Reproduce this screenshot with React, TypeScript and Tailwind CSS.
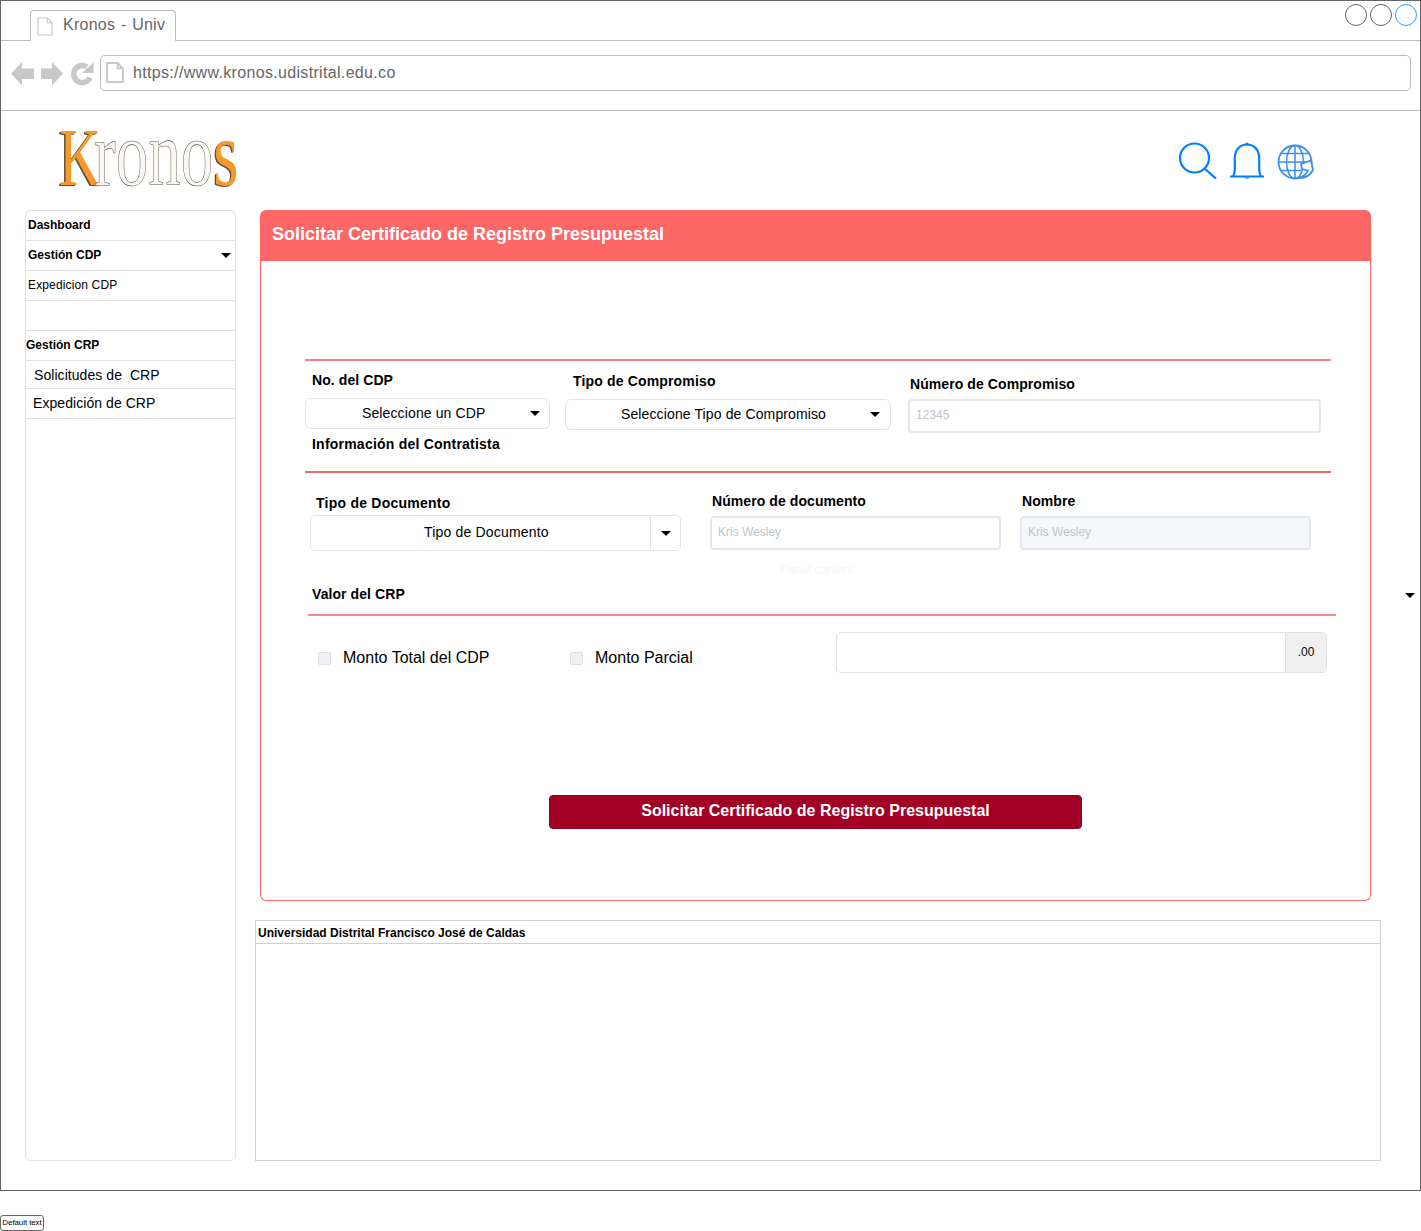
function Caret({ className = "" }: { className?: string }) {
  return (
    <svg viewBox="0 0 10 5" className={"w-[10px] h-[5px] shrink-0 " + className}>
      <polygon points="0,0 10,0 5,5" fill="#000" />
    </svg>
  );
}

function PageIcon({ className = "", width = 1.2 }: { className?: string; width?: number }) {
  return (
    <svg viewBox="0 0 17 20" className={"shrink-0 " + className}>
      <path d="M1 1H11L16 6V19H1Z M11 1V6H16" fill="#fff" stroke="#c8c8c8" strokeWidth={width} />
    </svg>
  );
}

function NavIcons() {
  return (
    <svg viewBox="0 0 84 26" className="w-[84px] h-[26px] shrink-0 mt-[-4px]">
      <path d="M1 12.500L12 1V7.500H24V18H12V24.500Z" fill="#c8c8c8" />
      <path d="M53 12.500L42 1V7.500H31V18H42V24.500Z" fill="#c8c8c8" />
      <path d="M80 16.500A8.500 8.500 0 1 1 77 6" fill="none" stroke="#c8c8c8" strokeWidth="5.500" />
      <path d="M72 12H83.500V1.500Z" fill="#c8c8c8" />
    </svg>
  );
}

function HeaderIcons() {
  return (
    <div className="flex items-start gap-[12px] ml-[940px] mt-[30px]">
      <svg viewBox="0 0 38 38" className="w-[38px] h-[38px]" fill="none" stroke="#007fff" strokeWidth="2.2">
        <circle cx="15.5" cy="17" r="14.5" />
        <path d="M25.5 27.5L37 37.5" />
      </svg>
      <svg viewBox="0 0 36 38" className="w-[36px] h-[38px]" fill="none" stroke="#007fff" strokeWidth="2.2">
        <path d="M1 35.5H35 M4 35.5C5.5 33 5.8 31 5.8 28V17C5.8 9 11 3.500 18 3.500S30.200 9 30.200 17V28C30.200 31 30.500 33 32 35.500" />
        <circle cx="18" cy="3" r="1.500" fill="#007fff" stroke="none" />
        <path d="M15 36.500C16 38 20 38 21 36.500Z" fill="#007fff" stroke="none" />
      </svg>
      <svg viewBox="0 0 38 38" className="w-[38px] h-[38px] mt-[2px]" fill="none" stroke="#3d8ee8" strokeWidth="1.5">
        <circle cx="18" cy="19" r="16.500" strokeWidth="1.800" />
        <ellipse cx="18" cy="19" rx="8.500" ry="16.500" />
        <path d="M18 2.500V35.500 M4 10.500H32 M1.500 19H30 M4 27.500H24" />
        <path d="M24 21L34 17.500L36 27C33 33 27 35 22 35C27 33 30 30 31 27.500L25 26Z" fill="#fff" strokeWidth="1.800" />
      </svg>
    </div>
  );
}

function Logo() {
  return (
    <div className="w-[180px] ml-[58px] mt-[-2px] h-[90px] font-['Liberation_Serif',serif]">
      <div className="origin-left scale-x-[0.7] whitespace-nowrap text-[93px] leading-[90px] text-[#faf8f5] [-webkit-text-stroke:0.6px_#5c5040]">
        <span className="text-[83px] tracking-[-10px] text-[#f7992a] [-webkit-text-stroke:0] [text-shadow:-2px_1px_0_#5c5040]">K</span>
        <span>rono</span>
        <span className="text-[#f7992a] [-webkit-text-stroke:0] [text-shadow:-2px_1px_0_#5c5040]">s</span>
      </div>
    </div>
  );
}

function Sidebar() {
  return (
    <aside className="w-[211px] h-[951px] ml-[24px] shrink-0 border border-[#e0e0e0] rounded-[6px] text-black">
      <div className="h-[30px] pb-[2px] border-b border-[#e0e0e0] flex items-center pl-[2px] text-[12px] font-bold">Dashboard</div>
      <div className="h-[30px] pb-[2px] border-b border-[#e0e0e0] flex items-center justify-between pl-[2px] pr-[4px] text-[12px] font-bold">
        Gestión CDP
        <Caret className="mt-[2px]" />
      </div>
      <div className="h-[30px] pb-[2px] border-b border-[#e0e0e0] flex items-center pl-[2px] text-[12px] tracking-[0.14px]">Expedicion CDP</div>
      <div className="h-[30px] border-b border-[#e0e0e0]" />
      <div className="h-[30px] pb-[2px] border-b border-[#e0e0e0] flex items-center text-[12px] font-bold">Gestión CRP</div>
      <div className="h-[28px] pt-[2px] border-b border-[#e0e0e0] flex items-center pl-[8px] text-[14px] tracking-[0.06px] whitespace-pre">Solicitudes de  CRP</div>
      <div className="h-[30px] border-b border-[#e0e0e0] flex items-center pl-[7px] text-[14px] tracking-[0.06px]">Expedición de CRP</div>
    </aside>
  );
}

function Label({ children, className = "" }: { children: React.ReactNode; className?: string }) {
  return <div className={"h-[20px] leading-[20px] text-[14px] font-bold tracking-[0.08px] text-black " + className}>{children}</div>;
}

function TextBox({ text, className = "" }: { text: string; className?: string }) {
  return (
    <div className={"h-[34px] pb-[2px] border-2 border-[#e4e7ed] rounded-[4px] flex items-center px-[6px] text-[12px] text-[#c0c4cc] " + className}>
      {text}
    </div>
  );
}

function Select({ text, className = "" }: { text: string; className?: string }) {
  return (
    <div className={"h-[31px] border border-[#e4e4e4] rounded-[6px] flex items-center justify-between text-[14px] tracking-[0.12px] text-black " + className}>
      {text}
      <Caret />
    </div>
  );
}

function CheckItem({ text, className = "" }: { text: string; className?: string }) {
  return (
    <div className={"mt-[32px] h-[20px] flex items-center gap-[12px] text-[16px] text-black " + className}>
      <span className="w-[13px] h-[13px] mt-[1px] rounded-[2px] bg-[#eef0f5] border border-[#dcdfe6]" />
      {text}
    </div>
  );
}

function RequestPanel() {
  return (
    <section className="w-[1111px] h-[691px] ml-[24px] flex flex-col">
      <div className="h-[51px] pb-[2px] shrink-0 bg-[#ff6666] rounded-t-[6px] flex items-center pl-[12px] text-[18px] font-bold text-white">
        Solicitar Certificado de Registro Presupuestal
      </div>
      <div className="flex-1 border-x border-b border-[#ff6666] rounded-b-[6px] pt-[98px]">
        <div className="h-[2px] w-[1026px] ml-[44px] bg-[#f98080]" />

        <div className="h-[110px] flex items-start">
          <div className="w-[245px] ml-[44px] mt-[9px]">
            <Label className="pl-[7px] mb-[8px]">No. del CDP</Label>
            <Select text="Seleccione un CDP" className="pl-[56px] pr-[9px]" />
            <Label className="pl-[7px] mt-[5px]">
              <span className="tracking-[0.22px]">Información del Contratista</span>
            </Label>
          </div>
          <div className="w-[326px] ml-[15px] mt-[10px]">
            <Label className="pl-[8px] mb-[8px]">
              <span className="tracking-[0.16px]">Tipo de Compromiso</span>
            </Label>
            <Select text="Seleccione Tipo de Compromiso" className="pl-[55px] pr-[10px]" />
          </div>
          <div className="w-[413px] ml-[17px] mt-[13px]">
            <Label className="pl-[2px] mb-[5px]">Número de Compromiso</Label>
            <TextBox text="12345" />
          </div>
        </div>

        <div className="h-[2px] w-[1026px] ml-[44px] bg-[#ea6b66]" />

        <div className="h-[87px] flex items-start">
          <div className="w-[371px] ml-[49px] mt-[20px]">
            <Label className="pl-[6px] mb-[2px]">
              <span className="tracking-[0.24px]">Tipo de Documento</span>
            </Label>
            <div className="h-[36px] border border-[#e4e4e4] rounded-[5px] flex items-center text-[14px] tracking-[0.18px] text-black">
              <div className="flex-1 h-full pb-[2px] flex items-center pl-[113px] border-r border-[#e4e4e4]">Tipo de Documento</div>
              <div className="w-[29px] flex justify-center">
                <Caret />
              </div>
            </div>
          </div>
          <div className="w-[291px] ml-[29px] mt-[18px]">
            <Label className="pl-[2px] mb-[5px]">Número de documento</Label>
            <TextBox text="Kris Wesley" />
          </div>
          <div className="w-[291px] ml-[19px] mt-[18px]">
            <Label className="pl-[2px] mb-[5px]">Nombre</Label>
            <TextBox text="Kris Wesley" className="bg-[#f5f7fa]" />
          </div>
        </div>

        <div className="h-[20px] leading-[20px] pl-[3px] text-center text-[12px] text-[#f6f6f6]">Panel content</div>
        <Label className="ml-[51px] mt-[4px]">Valor del CRP</Label>
        <div className="h-[2px] w-[1028px] ml-[47px] mt-[10px] bg-[#f58a8a]" />

        <div className="flex items-start">
          <CheckItem text="Monto Total del CDP" className="w-[252px] ml-[57px]" />
          <CheckItem text="Monto Parcial" className="w-[266px]" />
          <div className="w-[491px] h-[41px] mt-[16px] border border-[#e0e0e0] rounded-[5px] flex justify-end">
            <div className="w-[41px] pb-[2px] bg-[#f0f0f0] border-l border-[#e0e0e0] rounded-r-[5px] flex items-center justify-center text-[12px] text-black">
              .00
            </div>
          </div>
        </div>

        <button className="block w-[533px] h-[34px] pb-[2px] ml-[288px] mt-[122px] bg-[#a20025] rounded-[4px] border border-[#8f001f] text-[16px] font-bold text-white text-center">
          Solicitar Certificado de Registro Presupuestal
        </button>
      </div>
    </section>
  );
}

export default function App() {
  return (
    <div className="w-[1421px] h-[1231px] bg-white font-['Liberation_Sans',Arial,sans-serif] overflow-hidden">
      <div className="relative h-[1191px] border border-[#666] flex flex-col">
        <div className="h-[40px] shrink-0 border-b border-[#bdbdbd] flex items-start">
          <div className="relative top-[9px] ml-[29px] w-[146px] h-[31px] pb-[3px] bg-white border border-b-0 border-[#bdbdbd] rounded-t-[4px] flex items-center gap-[10px] pl-[6px] text-[16px] tracking-[0.25px] [word-spacing:1px] text-[#666]">
            <PageIcon className="w-[16px] h-[19px] mt-[4px]" />
            <span className="whitespace-pre">Kronos - Univ</span>
          </div>
          <div className="ml-auto mr-[3px] mt-[3px] flex gap-[3px]">
            <span className="w-[22px] h-[22px] rounded-full border border-[#666]" />
            <span className="w-[22px] h-[22px] rounded-full border border-[#666]" />
            <span className="w-[22px] h-[22px] rounded-full border border-[#2f9bff]" />
          </div>
        </div>

        <div className="h-[70px] shrink-0 border-b border-[#bdbdbd] flex items-center pl-[9px] pr-[9px]">
          <NavIcons />
          <div className="flex-1 h-[36px] ml-[6px] mt-[-6px] border border-[#bdbdbd] rounded-[5px] flex items-center gap-[9px] pl-[5px] text-[16px] tracking-[0.33px] text-[#666]">
            <PageIcon className="w-[18px] h-[21px]" width={1.8} />
            https://www.kronos.udistrital.edu.co
          </div>
        </div>

        <header className="h-[99px] shrink-0 flex items-start">
          <Logo />
          <HeaderIcons />
        </header>

        <div className="flex-1 flex items-start">
          <Sidebar />
          <div className="flex flex-col">
            <RequestPanel />
            <section className="w-[1126px] h-[241px] ml-[19px] mt-[19px] border border-[#d0d0d0]">
              <div className="h-[23px] pt-[2px] border-b border-[#d0d0d0] flex items-center pl-[2px] text-[12px] font-bold text-black">
                Universidad Distrital Francisco José de Caldas
              </div>
            </section>
          </div>
        </div>

        <Caret className="absolute left-[1404px] top-[592px]" />
      </div>

      <div className="mt-[24px] w-[44px] h-[16px] border border-[#666] rounded-[3px] flex items-center justify-center text-[8px] tracking-[-0.1px] text-black whitespace-nowrap">
        Default text
      </div>
    </div>
  );
}
